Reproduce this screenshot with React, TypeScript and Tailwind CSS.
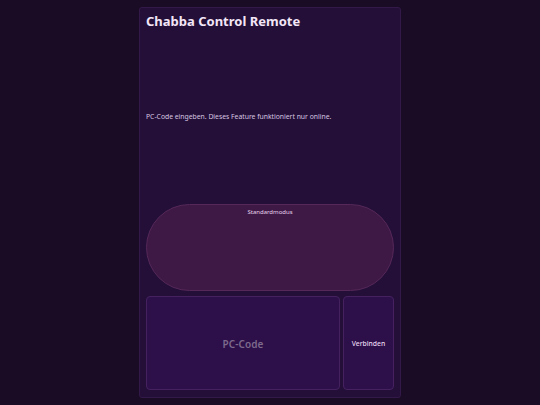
import React from "react";

const App = () => {
  return (
    <div
      className="w-full h-screen bg-[#1b0c25] flex justify-center py-[7px]"
      style={{ fontFamily: '"Noto Sans", "DejaVu Sans", sans-serif' }}
    >
      <div className="w-[262px] h-full flex flex-col border border-[#33194a] rounded-[3px] bg-[#230f37] px-[6px] pt-[5px] pb-[7px]">
        <h1 className="text-[13px] leading-[16px] font-bold text-[#f3e6f7]">
          Chabba Control Remote
        </h1>
        <div className="flex-1 flex items-center">
          <p className="text-[6.8px] leading-[9px] text-[#d9c6e2]">
            PC-Code eingeben. Dieses Feature funktioniert nur online.
          </p>
        </div>
        <div className="h-[87px] rounded-full border border-[#552859] bg-[#3e1945] flex justify-center pt-[3px]">
          <span className="text-[6px] leading-[8px] text-[#e6d2ec]">Standardmodus</span>
        </div>
        <div className="mt-[5px] h-[94px] flex gap-[3px]">
          <div className="flex-1 rounded-[4px] border border-[#45225f] bg-[#2d0f4a] flex items-center justify-center pt-[2px]">
            <span className="text-[10px] font-semibold tracking-[0.1px] text-[#7d6a8c]">PC-Code</span>
          </div>
          <div className="w-[51px] rounded-[4px] border border-[#45225f] bg-[#2d0f4a] flex items-center justify-center pt-[3px]">
            <span className="text-[6.8px] font-medium text-[#e8d8f0]">Verbinden</span>
          </div>
        </div>
      </div>
    </div>
  );
};

export default App;
